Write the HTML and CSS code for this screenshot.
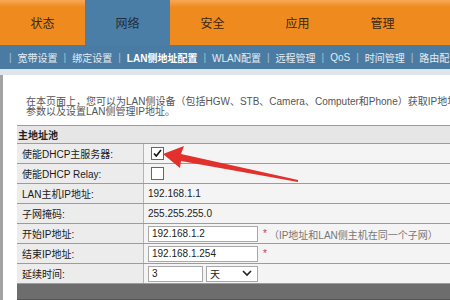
FILE: index.html
```html
<!DOCTYPE html>
<html lang="zh-CN">
<head>
    <meta charset="UTF-8">
    <title>LAN侧地址配置</title>
    <link rel="stylesheet" href="styles.css">
</head>
<body>
    <div class="topnav">
        <div class="tab">状态</div>
        <div class="tab active">网络</div>
        <div class="tab">安全</div>
        <div class="tab">应用</div>
        <div class="tab">管理</div>
    </div>
    <div class="subnav">
        <span class="sep">|</span><span>宽带设置</span>
        <span class="sep">|</span><span>绑定设置</span>
        <span class="sep">|</span><span class="current">LAN侧地址配置</span>
        <span class="sep">|</span><span>WLAN配置</span>
        <span class="sep">|</span><span>远程管理</span>
        <span class="sep">|</span><span>QoS</span>
        <span class="sep">|</span><span>时间管理</span>
        <span class="sep">|</span><span>路由配置</span>
    </div>
    <div class="strip"></div>

    <div class="main">
        <p class="intro">在本页面上，您可以为LAN侧设备（包括HGW、STB、Camera、Computer和Phone）获取IP地址配置<br>参数以及设置LAN侧管理IP地址。</p>

        <table class="pool">
            <tr><th colspan="2">主地址池</th></tr>
            <tr>
                <td class="label">使能DHCP主服务器:</td>
                <td class="value"><span class="check on"><svg width="11" height="11" viewBox="0 0 11 11"><path d="M2 5.5 L4.3 8 L9 2" fill="none" stroke="#111" stroke-width="1.6"/></svg></span></td>
            </tr>
            <tr>
                <td class="label">使能DHCP Relay:</td>
                <td class="value"><span class="check"></span></td>
            </tr>
            <tr>
                <td class="label">LAN主机IP地址:</td>
                <td class="value">192.168.1.1</td>
            </tr>
            <tr>
                <td class="label">子网掩码:</td>
                <td class="value">255.255.255.0</td>
            </tr>
            <tr>
                <td class="label">开始IP地址:</td>
                <td class="value"><span class="field">192.168.1.2</span><span class="req">*</span><span class="hint">（IP地址和LAN侧主机在同一个子网）</span></td>
            </tr>
            <tr>
                <td class="label">结束IP地址:</td>
                <td class="value"><span class="field">192.168.1.254</span><span class="req">*</span></td>
            </tr>
            <tr>
                <td class="label">延续时间:</td>
                <td class="value"><span class="field short">3</span><span class="field pick">天<svg width="10" height="7" viewBox="0 0 10 7"><path d="M1 1 L5 5 L9 1" fill="none" stroke="#222" stroke-width="1.6"/></svg></span></td>
            </tr>
            <tr class="dark"><td colspan="2"></td></tr>
            <tr><td class="next" colspan="2">从地址池配置</td></tr>
        </table>
    </div>

    <!-- red pointer drawn over the form -->
    <svg class="arrow" width="450" height="300" viewBox="0 0 450 300">
        <polygon points="163,154 184,146 181,154 298,180 298,182 181,161 180,168" fill="#e2302c"/>
    </svg>
</body>
</html>
```

FILE: styles.css
```css
body{
    margin: 0;
    width: 450px;
    height: 300px;
    overflow: hidden;
    position: relative;
    font-family: "Liberation Sans", "Noto Sans CJK SC", sans-serif;
    background-color: #fff;
}

.topnav{
    display: flex;
    height: 45px;
    background: linear-gradient(#f7a955, #ef8a1f 7px, #ef8a1f);
}
.tab{
    width: 85px;
    flex: none;
    text-align: center;
    line-height: 48px;
    font-size: 12px;
    color: #3b2812;
}
.tab.active{
    background-color: #4b7ea6;
    color: #1e2e3d;
}

.subnav{
    display: flex;
    align-items: center;
    gap: 6px;
    height: 24px;
    padding-left: 9px;
    background-color: #4a7ca3;
    color: #e4ecf2;
    font-size: 10px;
    white-space: nowrap;
}
.subnav .sep{
    color: #a9c0d2;
}
.subnav .current{
    font-weight: bold;
    color: #fff;
}

.strip{
    height: 6px;
    background-color: #dfe5ec;
}

.main{
    border-left: 3px solid #a3a3a3;
    padding: 22px 0 0 14px;
    height: 300px;
}
.intro{
    margin: 0 0 8px 9px;
    font-size: 10px;
    line-height: 10px;
    color: #555;
    white-space: nowrap;
}

.pool{
    border-collapse: collapse;
    width: 440px;
    font-size: 10px;
    color: #222;
}
.pool th{
    height: 17px;
    padding: 0 0 0 1px;
    text-align: left;
    font-weight: bold;
    background-color: #e6e6e6;
    border-top: 1px solid #9c9c9c;
    border-bottom: 1px solid #9c9c9c;
}
.pool td{
    height: 19px;
    padding: 0;
    border-bottom: 1px solid #9c9c9c;
}
.label{
    width: 121px;
    padding-left: 5px !important;
    background-color: #ececec;
    border-right: 1px solid #b4b4b4;
    color: #1a1a1a;
}
.value{
    padding-left: 4px !important;
    background-color: #f4f4f4;
    white-space: nowrap;
}

.check{
    display: inline-block;
    width: 11px;
    height: 11px;
    border: 1px solid #666;
    background-color: #fff;
    vertical-align: middle;
    margin-left: 3px;
}
.check svg{
    display: block;
}

.field{
    display: inline-flex;
    align-items: center;
    box-sizing: border-box;
    width: 110px;
    height: 16px;
    padding-left: 3px;
    border: 1px solid #a8a8a8;
    background-color: #fff;
    vertical-align: middle;
}
.field.short{
    width: 55px;
}
.field.pick{
    width: 52px;
    margin-left: 3px;
    justify-content: space-between;
    padding-right: 5px;
}
.req{
    color: #d23a3a;
    margin: 0 2px 0 5px;
    vertical-align: middle;
}
.hint{
    color: #777;
    vertical-align: middle;
}

.dark td{
    height: 15px;
    background-color: #6d6d6d;
    border-bottom: 1px solid #555;
}
.pool td.next{
    padding-left: 2px;
    vertical-align: top;
    background-color: #fff;
}

.arrow{
    position: absolute;
    left: 0;
    top: 0;
    pointer-events: none;
}
```
